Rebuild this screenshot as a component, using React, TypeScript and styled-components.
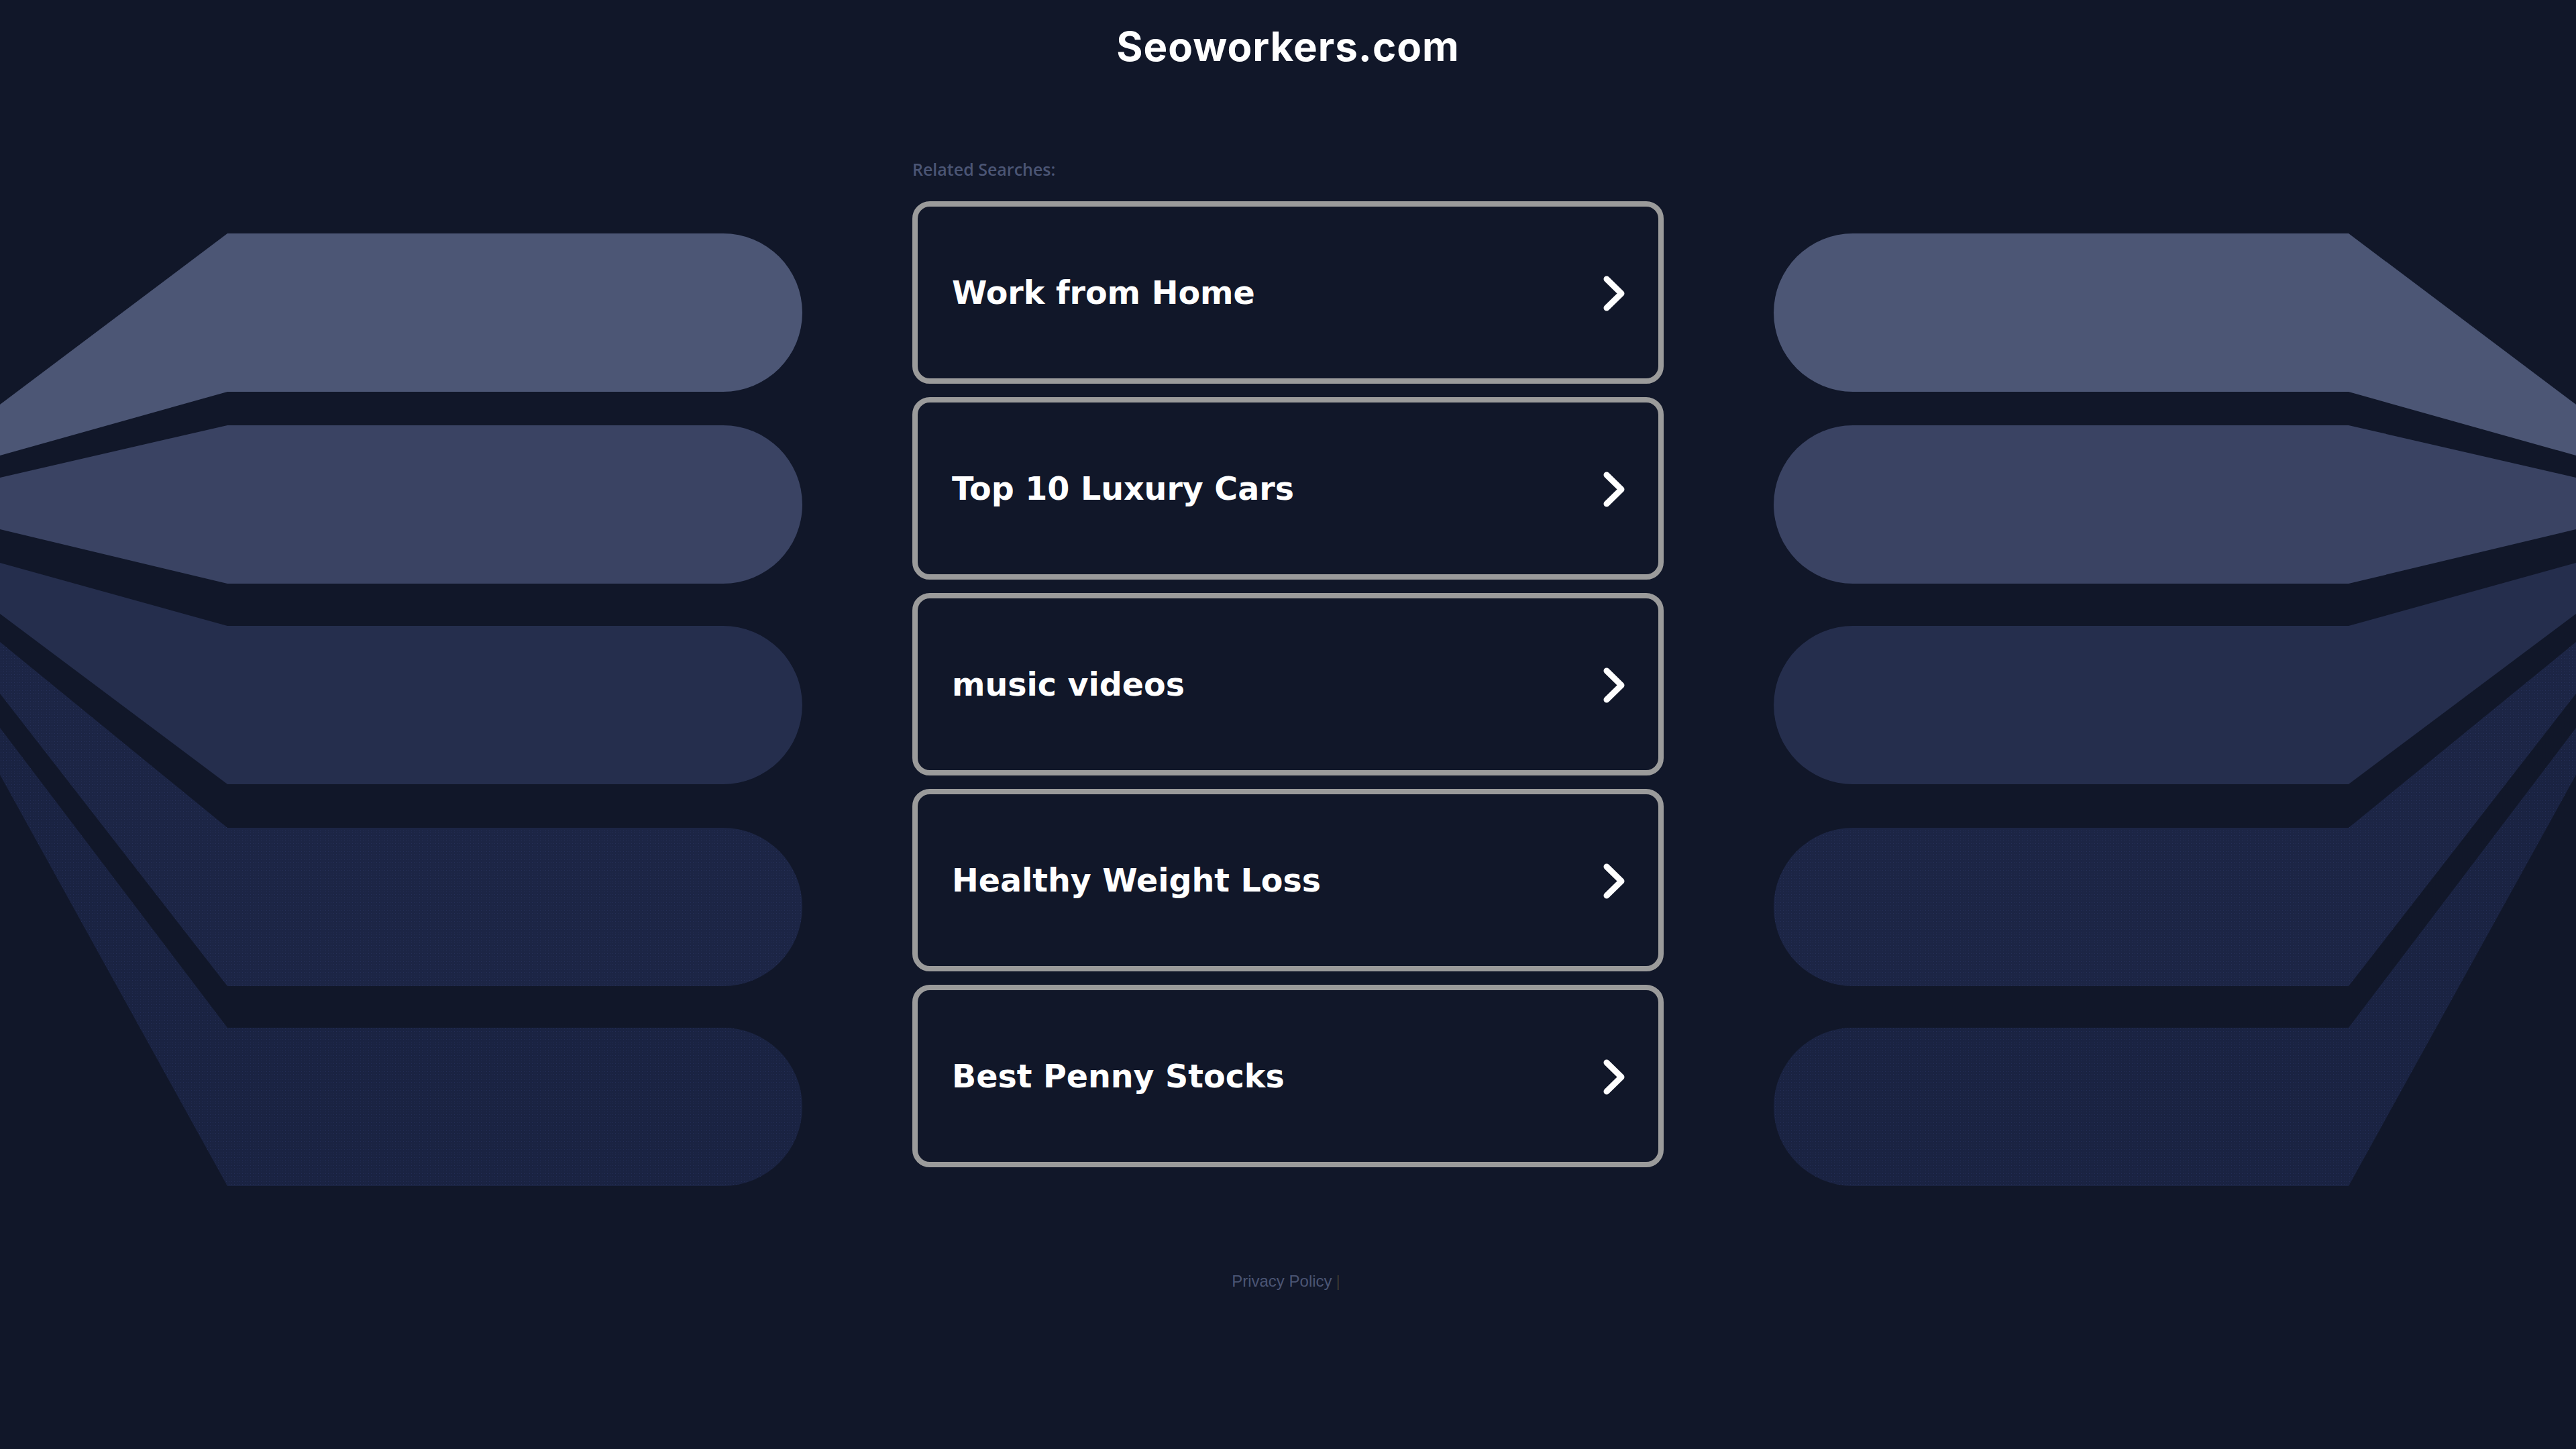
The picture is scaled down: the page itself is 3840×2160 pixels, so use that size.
import React from "react";
import styled, { createGlobalStyle } from "styled-components";

const GlobalStyle = createGlobalStyle`
  html, body {
    margin: 0;
    padding: 0;
    background: #111729;
  }
  body {
    font-family: "Liberation Sans", Arial, sans-serif;
  }
`;

const Page = styled.div`
  width: 3840px;
  min-height: 2160px;
  background: #111729;
  display: flex;
  flex-direction: column;
  align-items: center;
`;

const Header = styled.header`
  padding-top: 29px;
  height: 80px;
  display: flex;
  justify-content: center;
`;

const Title = styled.h1`
  margin: 0;
  font-family: Inter, "Open Sans", sans-serif;
  font-weight: 700;
  font-size: 60px;
  line-height: 80px;
  letter-spacing: 1px;
  color: #ffffff;
`;

const Main = styled.main`
  margin-top: 128px;
  display: grid;
  grid-template-columns: 1196px 1120px 1196px;
  column-gap: 164px;
  justify-content: center;
  align-items: start;
`;

const Art = styled.svg<{ $mirrored?: boolean }>`
  display: block;
  width: 1196px;
  height: 1420px;
  margin-top: 111px;
  transform: ${(p) => (p.$mirrored ? "scaleX(-1)" : "none")};
`;

const Center = styled.section`
  display: flex;
  flex-direction: column;
`;

const Label = styled.div`
  font-family: "Open Sans", Inter, sans-serif;
  font-weight: 600;
  font-size: 25px;
  line-height: 30px;
  color: #4b5574;
  margin-bottom: 33px;
`;

const List = styled.div`
  display: flex;
  flex-direction: column;
  gap: 20px;
`;

const Card = styled.a`
  box-sizing: border-box;
  height: 272px;
  display: flex;
  align-items: center;
  justify-content: space-between;
  padding: 2px 50px 0 51px;
  border: 8px solid #9b9b9b;
  border-radius: 26px;
  background: #111729;
  color: #ffffff;
  text-decoration: none;
  font-family: "DejaVu Sans", Verdana, sans-serif;
  font-weight: 700;
  font-size: 47.5px;
  line-height: 60px;
`;

const Chevron = styled.svg`
  display: block;
  width: 32px;
  height: 53px;
  flex: none;
`;

const Footer = styled.footer`
  margin-top: 128px;
  margin-right: 6px;
  font-family: "Liberation Sans", Arial, sans-serif;
  font-size: 24px;
  line-height: 28px;
  color: #4b5574;
  display: flex;
  gap: 6px;
`;

const Bar = styled.span`
  color: #3a3a32;
`;

const shapes = [
  { top: 348, bottom: 584, a: 603, b: 679, fill: "#4c5675" },
  { top: 634, bottom: 870, a: 712, b: 789, fill: "#3a4363" },
  { top: 933, bottom: 1169, a: 839, b: 915, fill: "#252e4d" },
  { top: 1234, bottom: 1470, a: 957, b: 1034, fill: "url(#dotsA)" },
  { top: 1532, bottom: 1768, a: 1085, b: 1155, fill: "url(#dotsB)" },
];

function shapePath(s: { top: number; bottom: number; a: number; b: number }) {
  const r = (s.bottom - s.top) / 2;
  const flatEnd = 1196 - r;
  return `M0,${s.a} L339,${s.top} L${flatEnd},${s.top} A${r},${r} 0 0 1 ${flatEnd},${s.bottom} L339,${s.bottom} L0,${s.b} Z`;
}

function Fan({ mirrored, id }: { mirrored?: boolean; id: string }) {
  return (
    <Art $mirrored={mirrored} viewBox="0 348 1196 1420" preserveAspectRatio="none">
      <defs>
        <pattern id={`dotsA${id}`} width="4" height="4" patternUnits="userSpaceOnUse">
          <rect width="4" height="4" fill="#1c2545" />
          <rect x="1" y="1" width="1" height="1" fill="#263058" />
        </pattern>
        <pattern id={`dotsB${id}`} width="4" height="4" patternUnits="userSpaceOnUse">
          <rect width="4" height="4" fill="#1a2342" />
          <rect x="1" y="1" width="1" height="1" fill="#242e56" />
        </pattern>
      </defs>
      {shapes.map((s, i) => (
        <path
          key={i}
          d={shapePath(s)}
          fill={s.fill.startsWith("url") ? s.fill.replace(")", `${id})`) : s.fill}
        />
      ))}
    </Art>
  );
}

const searches = [
  "Work from Home",
  "Top 10 Luxury Cars",
  "music videos",
  "Healthy Weight Loss",
  "Best Penny Stocks",
];

export default function App() {
  return (
    <>
      <GlobalStyle />
      <Page>
        <Header>
          <Title>Seoworkers.com</Title>
        </Header>
        <Main>
          <Fan id="L" />
          <Center>
            <Label>Related Searches:</Label>
            <List>
              {searches.map((s) => (
                <Card key={s} href="#">
                  <span>{s}</span>
                  <Chevron viewBox="0 0 32 53">
                    <polyline
                      points="5,5 27,26.5 5,48"
                      fill="none"
                      stroke="#ffffff"
                      strokeWidth="9"
                      strokeLinecap="round"
                      strokeLinejoin="round"
                    />
                  </Chevron>
                </Card>
              ))}
            </List>
          </Center>
          <Fan id="R" mirrored />
        </Main>
        <Footer>
          <span>Privacy Policy</span>
          <Bar>|</Bar>
        </Footer>
      </Page>
    </>
  );
}
